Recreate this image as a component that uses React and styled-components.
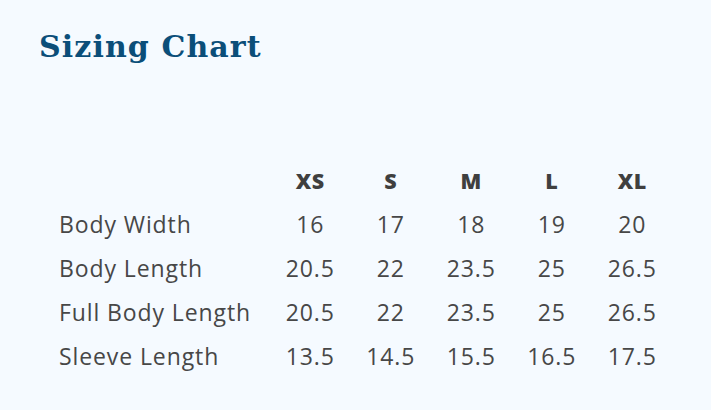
import React from 'react';
import styled, { createGlobalStyle } from 'styled-components';

const Global = createGlobalStyle`
  html, body { margin: 0; padding: 0; }
  body {
    background: #f5faff;
    font-family: 'Open Sans', 'Lato', sans-serif;
  }
`;

const Page = styled.div`
  width: 711px;
  height: 410px;
  box-sizing: border-box;
  padding: 27px 0 0 39px;
  background: #f5faff;
`;

const Title = styled.h2`
  margin: 0;
  font-family: 'DejaVu Serif', serif;
  font-weight: bold;
  font-size: 30px;
  line-height: 40px;
  letter-spacing: 1.1px;
  color: #0b4e79;
`;

const Chart = styled.div`
  display: grid;
  grid-template-columns: 211px repeat(5, 80.5px);
  grid-auto-rows: 44px;
  align-items: center;
  margin: 91px 0 0 20px;
  color: #474747;
`;

const Cell = styled.div`
  text-align: ${p => (p.$label ? 'left' : 'center')};
  font-weight: ${p => (p.$head ? 800 : 400)};
  font-size: ${p => (p.$head ? '21.5px' : '23px')};
  letter-spacing: ${p => (p.$head ? '0.5px' : '0.9px')};
  color: ${p => (p.$head ? '#3f3f3f' : '#474747')};
`;

const sizes = ['XS', 'S', 'M', 'L', 'XL'];
const rows = [
  ['Body Width', ['16', '17', '18', '19', '20']],
  ['Body Length', ['20.5', '22', '23.5', '25', '26.5']],
  ['Full Body Length', ['20.5', '22', '23.5', '25', '26.5']],
  ['Sleeve Length', ['13.5', '14.5', '15.5', '16.5', '17.5']]
];

export default function App() {
  return (
    <Page>
      <Global />
      <Title>Sizing Chart</Title>
      <Chart>
        <Cell $label />
        {sizes.map(s => <Cell key={s} $head>{s}</Cell>)}
        {rows.map(([name, vals]) => (
          <React.Fragment key={name}>
            <Cell $label>{name}</Cell>
            {vals.map((v, i) => <Cell key={i}>{v}</Cell>)}
          </React.Fragment>
        ))}
      </Chart>
    </Page>
  );
}
